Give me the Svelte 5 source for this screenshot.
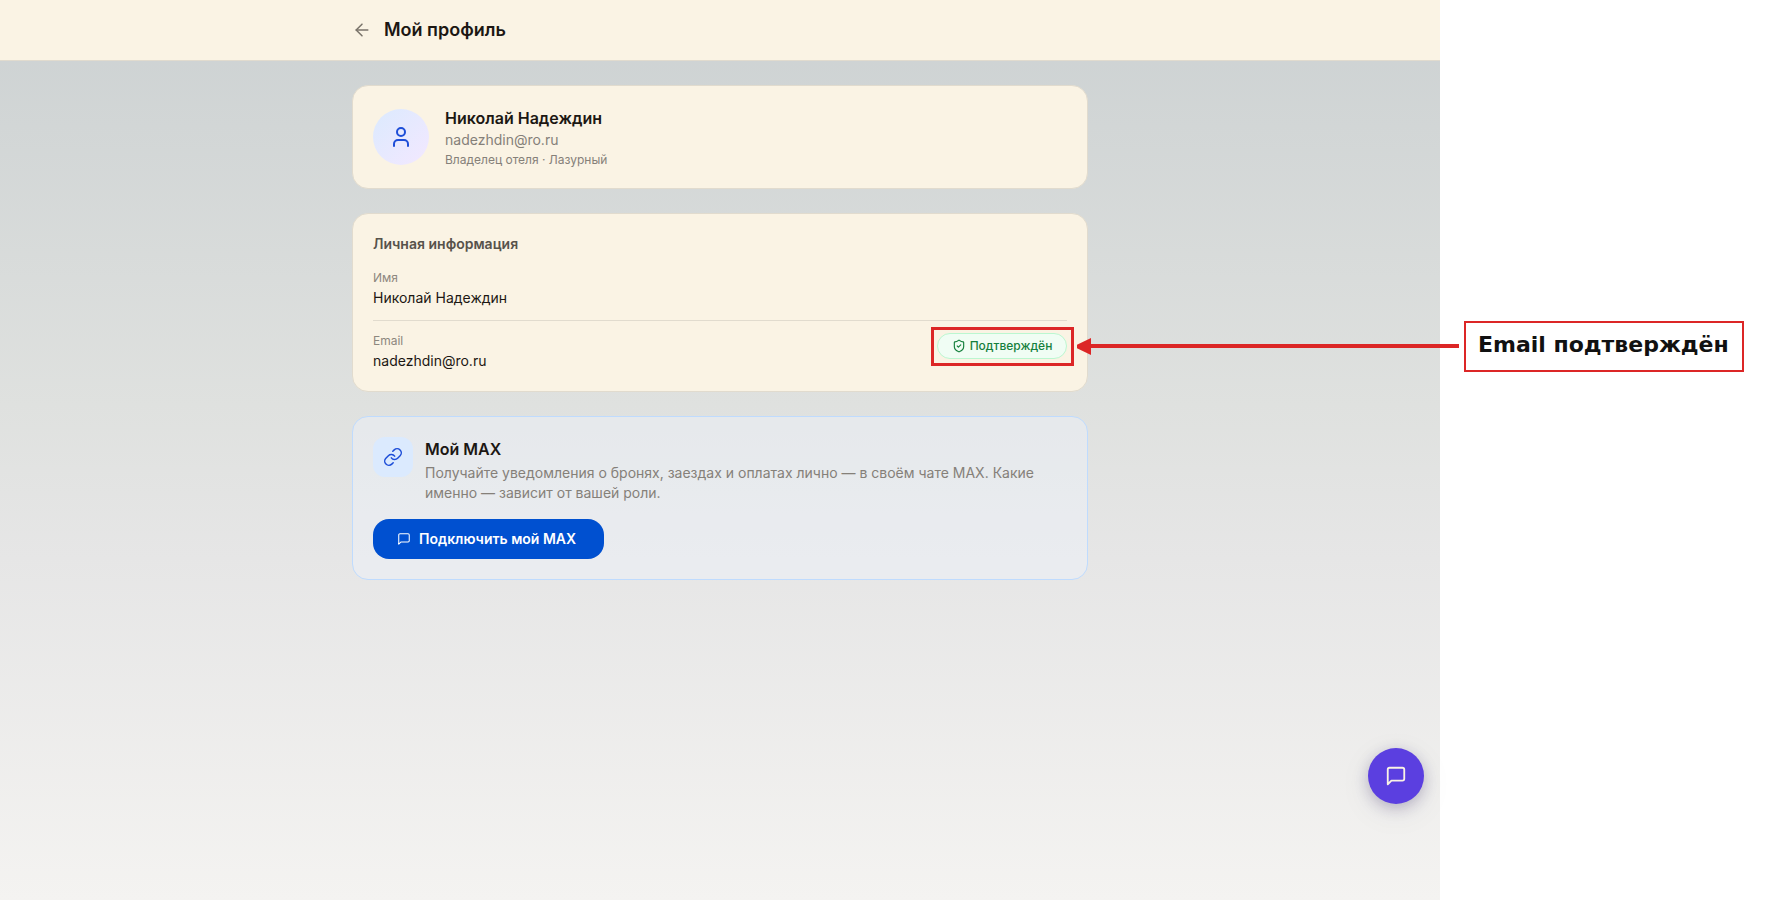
<script>
  const user = {
    name: 'Николай Надеждин',
    email: 'nadezhdin@ro.ru',
    role: 'Владелец отеля · Лазурный'
  };
</script>

{#snippet bubble(size, weight)}
  <svg width={size} height={size} viewBox="0 0 24 24" fill="none" stroke="currentColor" stroke-width={weight} stroke-linecap="round" stroke-linejoin="round" aria-hidden="true">
    <path d="M21 15a2 2 0 0 1-2 2H7l-4 4V5a2 2 0 0 1 2-2h14a2 2 0 0 1 2 2z" />
  </svg>
{/snippet}

<div class="page">
  <div class="app">
    <header>
      <div class="container bar">
        <a class="back" href="#back" aria-label="Назад">
          <svg width="20" height="20" viewBox="0 0 24 24" fill="none" stroke="currentColor" stroke-width="1.8" stroke-linecap="round" stroke-linejoin="round" aria-hidden="true">
            <path d="m12 19-7-7 7-7" /><path d="M19 12H5" />
          </svg>
        </a>
        <h1>Мой профиль</h1>
      </div>
    </header>

    <main class="container">
      <section class="card summary">
        <div class="avatar">
          <svg width="24" height="24" viewBox="0 0 24 24" fill="none" stroke="currentColor" stroke-width="2" stroke-linecap="round" stroke-linejoin="round" aria-hidden="true">
            <path d="M19 21v-2a4 4 0 0 0-4-4H9a4 4 0 0 0-4 4v2" /><circle cx="12" cy="7" r="4" />
          </svg>
        </div>
        <div>
          <h2>{user.name}</h2>
          <p class="muted">{user.email}</p>
          <p class="small">{user.role}</p>
        </div>
      </section>

      <section class="card">
        <h3>Личная информация</h3>
        <div class="row">
          <div>
            <p class="label">Имя</p>
            <p class="value">{user.name}</p>
          </div>
        </div>
        <div class="row">
          <div>
            <p class="label">Email</p>
            <p class="value">{user.email}</p>
          </div>
          <div class="status">
            <span class="badge">
              <svg width="14" height="14" viewBox="0 0 24 24" fill="none" stroke="currentColor" stroke-width="2" stroke-linecap="round" stroke-linejoin="round" aria-hidden="true">
                <path d="M20 13c0 5-3.5 7.5-7.66 8.95a1 1 0 0 1-.67-.01C7.5 20.5 4 18 4 13V6a1 1 0 0 1 1-1c2 0 4.5-1.2 6.24-2.72a1.17 1.17 0 0 1 1.52 0C14.51 3.81 17 5 19 5a1 1 0 0 1 1 1z" /><path d="m9 12 2 2 4-4" />
              </svg>
              Подтверждён
            </span>
            <span class="frame"></span>
            <span class="arrow"></span>
          </div>
        </div>
      </section>

      <section class="card max">
        <div class="intro">
          <div class="tile">
            <svg width="20" height="20" viewBox="0 0 24 24" fill="none" stroke="currentColor" stroke-width="1.8" stroke-linecap="round" stroke-linejoin="round" aria-hidden="true">
              <path d="M10 13a5 5 0 0 0 7.54.54l3-3a5 5 0 0 0-7.07-7.07l-1.72 1.71" /><path d="M14 11a5 5 0 0 0-7.54-.54l-3 3a5 5 0 0 0 7.07 7.07l1.71-1.71" />
            </svg>
          </div>
          <div>
            <h2>Мой MAX</h2>
            <p class="muted">Получайте уведомления о бронях, заездах и оплатах лично — в своём чате MAX. Какие именно — зависит от вашей роли.</p>
          </div>
        </div>
        <button class="connect" type="button">
          {@render bubble(14, 1.8)}
          Подключить мой MAX
        </button>
      </section>
    </main>

    <button class="chat" type="button" aria-label="Чат">{@render bubble(22, 2)}</button>
  </div>

  <aside><p class="note">Email подтверждён</p></aside>
</div>

<style>
  :global(body) {
    margin: 0;
    background: #fff;
  }
  .page {
    --side: 327px;
    --content: 736px;
    display: flex;
    min-height: 100vh;
    font-family: Inter, 'Noto Sans', sans-serif;
    font-size: 14px;
    line-height: 20px;
    color: #1c1713;
  }
  .page * {
    box-sizing: border-box;
  }
  h1, h2, h3, p {
    margin: 0;
  }
  svg {
    display: block;
    flex: none;
  }
  .app {
    position: relative;
    flex: 1;
    min-width: 0;
    background: linear-gradient(180deg, #ccd1d2 0%, #dfe1df 45%, #e6e6e6 62%, #f4f3f1 100%);
  }
  header {
    background: #faf3e4;
    border-bottom: 1px solid #e1dbce;
  }
  .container {
    max-width: calc(var(--content) + 32px);
    margin: 0 auto;
    padding: 0 16px;
  }
  .bar {
    display: flex;
    align-items: center;
    gap: 12px;
    height: 60px;
  }
  .back {
    color: #79736a;
  }
  h1 {
    font-size: 18px;
    line-height: 28px;
    font-weight: 600;
  }
  main.container {
    display: flex;
    flex-direction: column;
    gap: 24px;
    padding-top: 24px;
    padding-bottom: 24px;
  }
  .card {
    padding: 20px;
    background: #faf3e4;
    border: 1px solid #e1dbce;
    border-radius: 16px;
  }
  .summary {
    display: flex;
    align-items: center;
    gap: 16px;
  }
  .avatar {
    display: grid;
    place-items: center;
    width: 56px;
    height: 56px;
    border-radius: 50%;
    background: linear-gradient(135deg, #dbeafe, #f3e8ff);
    color: #1d4ed8;
  }
  h2 {
    font-size: 16px;
    line-height: 24px;
    font-weight: 600;
  }
  .muted {
    color: #858079;
  }
  .small {
    margin-top: 2px;
    font-size: 12px;
    line-height: 16px;
    color: #858079;
  }
  h3 {
    margin-bottom: 16px;
    font-size: 14px;
    line-height: 20px;
    font-weight: 600;
    color: #57524b;
  }
  .row {
    display: flex;
    justify-content: space-between;
    align-items: flex-start;
  }
  .row + .row {
    margin-top: 12px;
    padding-top: 12px;
    border-top: 1px solid #e1dbce;
  }
  .label {
    margin-bottom: 2px;
    font-size: 12px;
    line-height: 16px;
    color: #8d877e;
  }
  .status {
    position: relative;
  }
  .badge {
    display: flex;
    align-items: center;
    justify-content: center;
    gap: 4px;
    min-width: 130px;
    padding: 4px 10px;
    border: 1px solid #bbf7d0;
    border-radius: 13px;
    background: #f0fdf4;
    font-size: 12px;
    line-height: 16px;
    font-weight: 500;
    color: #15803d;
  }
  .frame {
    position: absolute;
    inset: -6px -7px -7px -6px;
    border: 3px solid #dc2626;
  }
  .arrow {
    position: absolute;
    top: 11px;
    left: calc(100% + 10px);
    width: calc((100vw - var(--side) - var(--content)) / 2 + 30px);
    height: 4px;
    background: linear-gradient(#dc2626, #dc2626) no-repeat right / calc(100% - 4px) 100%;
  }
  .arrow::before {
    content: '';
    position: absolute;
    left: 0;
    top: -6px;
    width: 14px;
    height: 17px;
    background: #dc2626;
    clip-path: polygon(0 40%, 100% 0, 100% 100%, 0 60%);
  }
  .max {
    background: rgba(239, 246, 255, 0.4);
    border-color: #bfdbfe;
  }
  .intro {
    display: flex;
    align-items: flex-start;
    gap: 12px;
    margin-bottom: 16px;
  }
  .tile {
    display: grid;
    flex: none;
    place-items: center;
    width: 40px;
    height: 40px;
    border-radius: 12px;
    background: #dbeafe;
    color: #1d4ed8;
  }
  .max .muted {
    margin-top: 2px;
  }
  .connect {
    display: flex;
    align-items: center;
    gap: 8px;
    min-width: 231px;
    height: 40px;
    padding: 0 24px;
    border: 0;
    border-radius: 16px;
    background: #0050d0;
    color: #fff;
    font: inherit;
    font-weight: 600;
  }
  .chat {
    position: absolute;
    right: 16px;
    bottom: 96px;
    display: grid;
    place-items: center;
    width: 56px;
    height: 56px;
    padding: 0;
    border: 0;
    border-radius: 50%;
    background: #5b3fe0;
    color: #faf3e4;
    box-shadow: 0 4px 14px rgba(40, 30, 90, 0.25), 0 8px 32px rgba(40, 30, 90, 0.08);
  }
  aside {
    flex: none;
    width: var(--side);
    padding: 321px 23px 0 24px;
    background: #fff;
  }
  .note {
    padding: 9px 12px 12px;
    border: 2px solid #dc2626;
    white-space: nowrap;
    font-family: 'DejaVu Sans', sans-serif;
    font-size: 22px;
    line-height: 26px;
    font-weight: 700;
    color: #111;
  }
</style>
